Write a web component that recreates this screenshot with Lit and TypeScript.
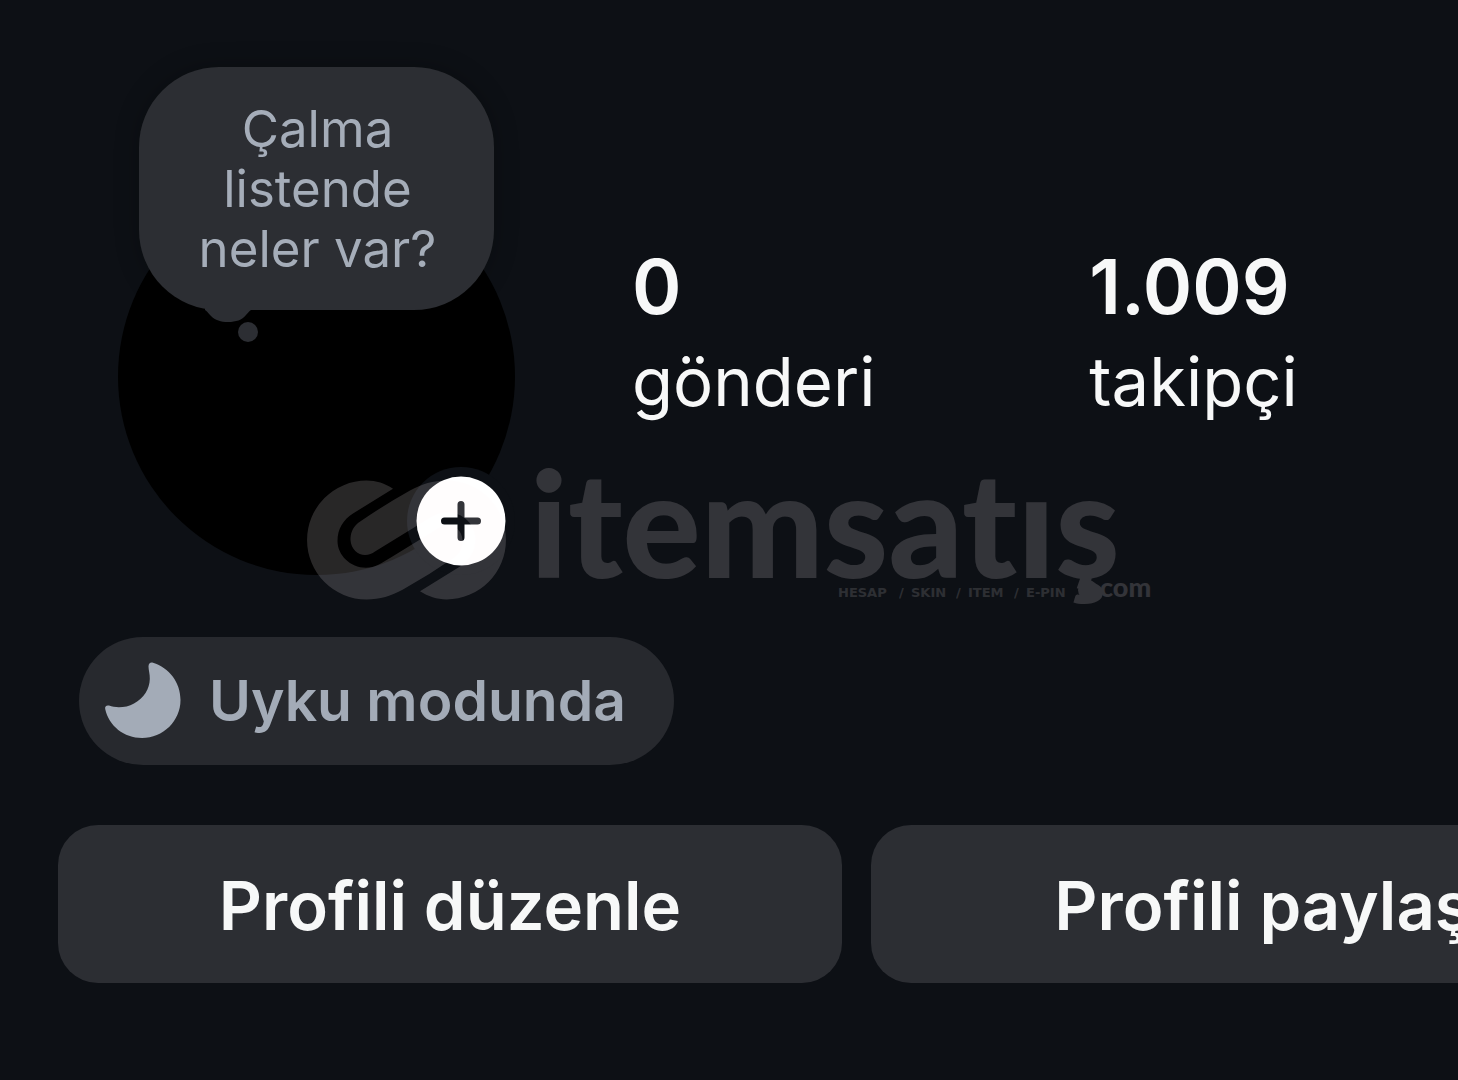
import { LitElement, html, css, svg } from "lit";
import { customElement, property } from "lit/decorators.js";

interface Stat {
  value: string;
  label: string;
}

@customElement("profile-avatar")
class ProfileAvatar extends LitElement {
  @property() note = "";

  static styles = css`
    :host {
      display: block;
      padding-top: 111px;
      position: relative;
    }
    button {
      font: inherit;
      border: 0;
      margin: 0;
      cursor: pointer;
    }
    .photo {
      width: 397px;
      height: 397px;
      border-radius: 50%;
      background: #000;
    }
    .note {
      position: absolute;
      top: 0;
      left: 21px;
      width: 355px;
      padding: 32px 54px 31px 56px;
      border-radius: 80px;
      background: #2c2e33;
      color: #a5adb9;
      font-size: 51px;
      line-height: 60px;
      text-align: center;
      box-shadow: 0 0 24px rgba(0, 0, 0, 0.25);
    }
    .tail {
      position: absolute;
      left: 62px;
      top: 100%;
      width: 60px;
      height: 36px;
      margin-top: -2px;
      fill: #2c2e33;
    }
    .add {
      position: absolute;
      right: 0;
      bottom: 0;
      display: grid;
      place-items: center;
      width: 108px;
      height: 108px;
      padding: 9px;
      border-radius: 50%;
      background: #0d1015;
    }
    .add svg {
      width: 90px;
      height: 90px;
    }
  `;

  render() {
    return html`
      <div class="photo"></div>
      <button class="note" type="button">
        ${this.note}
        <svg class="tail" viewBox="0 0 60 36" aria-hidden="true">
          <path d="M4 0H54L50 2C48 3 47 5 45 7C41 12 35 14 27 14C20 14 14 12 10 8C7 5 6 3 4 2Z" />
          <circle cx="47" cy="24" r="10" />
        </svg>
      </button>
      <button class="add" type="button" aria-label="Ekle">
        <svg viewBox="0 0 90 90" aria-hidden="true">
          <circle cx="45" cy="45" r="44.500" fill="#fff" />
          <path d="M45 28.500V61.500M28.500 45H61.500" stroke="#0d1015" stroke-width="7" stroke-linecap="round" />
        </svg>
      </button>
    `;
  }
}

@customElement("site-watermark")
class SiteWatermark extends LitElement {
  static styles = css`
    :host {
      display: block;
      pointer-events: none;
    }
    .mark {
      display: block;
      width: 100%;
      overflow: visible;
      fill: #fff4f8;
      opacity: 0.158;
      font-family: Lato, "Liberation Sans", sans-serif;
      font-variant-ligatures: none;
    }
    .name {
      font-size: 146px;
      font-weight: 900;
    }
    .domain {
      font-size: 27px;
      font-weight: 900;
    }
    .tagline {
      font-family: "DejaVu Sans", sans-serif;
      font-size: 13px;
      font-weight: 700;
      opacity: 0.85;
    }
  `;

  render() {
    const hook =
      "M86 8.700C78 3.500 69 .6 59.500 .6A59.450 59.450 0 0 0 59.500 119.500C73 119.500 84 116 96 109.500Q122 95 148 77C154 72 155.500 66 155.500 60C155 51 148 45 141 45C137 45 134 46.500 131 48.500L83 78C75 83 68 87.700 59 87.700C43 87.700 30.500 75 30.500 61C30.500 49 36 40 46 33.500Z";
    const tagline: [number, string][] = [
      [531, "HESAP"], [592, "/"], [604, "SKIN"], [649, "/"],
      [661, "ITEM"], [707, "/"], [719, "E-PIN"],
    ];
    return html`
      <svg class="mark" viewBox="0 0 846 120">
        <path d=${hook} />
        <path d=${hook} transform="rotate(180 99.500 60)" />
        <text class="name" x="223" y="98">itemsatış</text>
        <circle cx="781" cy="110" r="10" />
        <text class="domain" x="793" y="117">com</text>
        ${tagline.map(([x, word]) => svg`<text class="tagline" x=${x} y="117">${word}</text>`)}
      </svg>
    `;
  }
}

@customElement("app-root")
class AppRoot extends LitElement {
  private stats: Stat[] = [
    { value: "0", label: "gönderi" },
    { value: "1.009", label: "takipçi" },
  ];

  private actions = ["Profili düzenle", "Profili paylaş"];

  static styles = css`
    :host {
      display: block;
      min-height: 100vh;
      box-sizing: border-box;
      position: relative;
      overflow: hidden;
      padding: 67px 0 97px 58px;
      background: #0d1015;
      color: #f7f8f8;
      font-family: Inter, "Liberation Sans", sans-serif;
    }
    button {
      font: inherit;
      color: inherit;
      border: 0;
      margin: 0;
      cursor: pointer;
    }
    .header {
      display: grid;
      grid-template-columns: 397px 1fr;
      column-gap: 117px;
      padding-left: 60px;
    }
    .stats {
      display: grid;
      grid-template-columns: 55% 1fr;
      column-gap: 3px;
      align-content: start;
      margin: 0;
      padding-top: 174px;
    }
    .stat {
      display: flex;
      flex-direction: column;
      gap: 7px;
    }
    .value {
      margin: 0;
      font-size: 75px;
      line-height: 92px;
      font-weight: 600;
    }
    .label {
      order: 1;
      font-size: 67px;
      line-height: 84px;
    }
    .status {
      display: flex;
      align-items: center;
      gap: 27px;
      height: 128px;
      margin: 62px 0 0 21px;
      padding: 0 48px 2px 25px;
      border-radius: 64px;
      background: #27292e;
      color: #a3abb7;
      font-size: 57px;
      font-weight: 600;
    }
    .moon {
      width: 78px;
      height: 78px;
      fill: currentColor;
    }
    .actions {
      display: grid;
      grid-template-columns: repeat(2, 56%);
      gap: 29px;
      margin-top: 60px;
    }
    .action {
      height: 158px;
      padding-top: 3px;
      border-radius: 40px;
      background: #2c2e33;
      font-size: 67px;
      font-weight: 600;
    }
    .watermark {
      position: absolute;
      left: 307px;
      top: 480px;
      width: 846px;
    }
  `;

  render() {
    return html`
      <header class="header">
        <profile-avatar note="Çalma listende neler var?"></profile-avatar>
        <dl class="stats">
          ${this.stats.map(
            (s) => html`<div class="stat">
              <dt class="label">${s.label}</dt>
              <dd class="value">${s.value}</dd>
            </div>`
          )}
        </dl>
      </header>
      <button class="status" type="button">
        <svg class="moon" viewBox="0 0 78 78" aria-hidden="true">
          <path
            d="M44.500 5.500C44.500 2.500 46.500 1 49 1.800C65 7 76.500 21 76.500 39C76.500 60 59 77 38 77C20 77 5 65 1.200 48C.6 45.500 2.500 44 5 44.600C12 47.300 22 47 30 42.500C40 37 45.500 28 45.800 18C46 13 44.500 9 44.500 5.500Z"
          />
        </svg>
        <span>Uyku modunda</span>
      </button>
      <div class="actions">
        ${this.actions.map((a) => html`<button class="action" type="button">${a}</button>`)}
      </div>
      <site-watermark class="watermark"></site-watermark>
    `;
  }
}
